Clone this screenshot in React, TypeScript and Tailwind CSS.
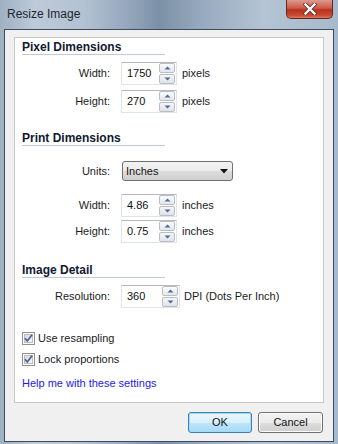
import React from 'react';

const font = "font-['Liberation_Sans',Arial,sans-serif]";

function Spinner() {
  return (
    <div className="flex flex-col gap-[1px] w-[16px] mr-[1px]">
      <div className="h-[10px] border border-[#b9bec6] rounded-[2px] bg-[linear-gradient(#fbfbfc,#e4e7ec)] flex items-center justify-center">
        <svg width="7" height="4" viewBox="0 0 7 4">
          <path d="M0.5 3.5 L3.5 0.5 L6.5 3.5 Z" fill="#4d6a94" />
        </svg>
      </div>
      <div className="h-[10px] border border-[#b9bec6] rounded-[2px] bg-[linear-gradient(#f5f6f8,#dfe3e9)] flex items-center justify-center">
        <svg width="7" height="4" viewBox="0 0 7 4">
          <path d="M0.5 0.5 L3.5 3.5 L6.5 0.5 Z" fill="#4d6a94" />
        </svg>
      </div>
    </div>
  );
}

function SpinField({ value, wide }: { value: string; wide?: boolean }) {
  return (
    <div
      className={
        (wide ? 'w-[59px] ' : 'w-[56px] ') +
        'h-full flex items-center bg-white border border-[#dfe3ea] border-t-[#b5b8bf]'
      }
    >
      <span className="flex-1 pl-[5px] text-[11px] text-[#111]">{value}</span>
      <Spinner />
    </div>
  );
}

function Heading({ text, mt }: { text: string; mt: string }) {
  return (
    <div className={mt + ' ml-[7px] w-[143px] h-[16px] border-b border-[#bccbda] flex items-end'}>
      <span className="block leading-[13px] text-[12px] font-bold text-[#101830]">{text}</span>
    </div>
  );
}

function FieldRow({
  label,
  value,
  unit,
  mt,
  wide,
}: {
  label: string;
  value: string;
  unit: string;
  mt: string;
  wide?: boolean;
}) {
  return (
    <div className={mt + ' h-[23px] flex items-center'}>
      <span className="w-[95px] text-right text-[11px] text-[#1b1b1b]">{label}</span>
      <div className="ml-[11px] h-full">
        <SpinField value={value} wide={wide} />
      </div>
      <span className={(wide ? 'ml-[4px]' : 'ml-[5px]') + ' text-[11px] text-[#1b1b1b]'}>{unit}</span>
    </div>
  );
}

function CheckBox({ label, mt }: { label: string; mt: string }) {
  return (
    <div className={mt + ' ml-[7px] h-[13px] flex items-center'}>
      <svg width="13" height="13" viewBox="0 0 13 13">
        <defs>
          <linearGradient id="cbg" x1="0" y1="0" x2="1" y2="1">
            <stop offset="0" stopColor="#d6d9de" />
            <stop offset="1" stopColor="#f7f8f9" />
          </linearGradient>
        </defs>
        <rect x="0.5" y="0.5" width="12" height="12" fill="#fdfdfd" stroke="#8e8f8f" />
        <rect x="2.5" y="2.5" width="8" height="8" fill="url(#cbg)" stroke="#b7bcc3" />
        <path d="M3 6.2 L5.3 9 L10 2.8" fill="none" stroke="#4a5f9a" strokeWidth="1.7" />
      </svg>
      <span className="ml-[3px] text-[11px] text-[#1b1b1b]">{label}</span>
    </div>
  );
}

export default function App() {
  return (
    <div
      className={
        font +
        ' w-[338px] h-[444px] overflow-hidden flex flex-col bg-[linear-gradient(90deg,#9fb0c3_0%,#bccad9_10%,#b3c2d2_25%,#8fa2b8_40%,#7c90a7_47%,#98aabe_60%,#b4c4d4_78%,#a7b9cc_100%)]'
      }
    >
      {/* Title bar */}
      <div className="h-[29px] flex items-start">
        <span className="pl-[7px] pt-[6px] text-[12px] leading-[16px] text-[#1e2530]">Resize Image</span>
        <div className="ml-auto mr-[5px] w-[47px] h-[19px] rounded-b-[5px] border border-t-0 border-[#5e2a24] bg-[linear-gradient(#dd9a8f_0%,#cc5a48_45%,#b8321f_55%,#c84a32_85%,#de7a5c_100%)] flex items-center justify-center">
          <svg width="14" height="12" viewBox="0 0 14 12">
            <path d="M2.5 1.5 L11.5 10.5 M11.5 1.5 L2.5 10.5" stroke="#6b2a22" strokeWidth="4" strokeLinecap="square" />
            <path d="M2.5 1.5 L11.5 10.5 M11.5 1.5 L2.5 10.5" stroke="#ffffff" strokeWidth="2.4" strokeLinecap="square" />
          </svg>
        </div>
      </div>

      {/* Client area */}
      <div className="mx-[4px] h-[413px] border border-[#3e4c5f] bg-[#f0f0f0] flex flex-col">
        <div className="mx-[9px] mt-[7px] h-[366px] border border-[#c9c9c9] bg-white flex flex-col">
          <Heading text="Pixel Dimensions" mt="mt-[1px]" />
          <FieldRow label="Width:" value="1750" unit="pixels" mt="mt-[7px]" />
          <FieldRow label="Height:" value="270" unit="pixels" mt="mt-[5px]" />

          <Heading text="Print Dimensions" mt="mt-[17px]" />
          <div className="mt-[15px] h-[20px] flex items-center">
            <span className="w-[95px] text-right text-[11px] text-[#1b1b1b]">Units:</span>
            <div className="ml-[12px] w-[111px] h-full rounded-[3px] border border-[#707070] bg-[linear-gradient(#f3f3f3_0%,#ebebeb_50%,#dddddd_51%,#cfcfcf_100%)] flex items-center pl-[3px] pr-[4px]">
              <span className="flex-1 text-[11px] text-[#111]">Inches</span>
              <svg width="8" height="5" viewBox="0 0 8 5">
                <path d="M0 0 L8 0 L4 4.5 Z" fill="#111" />
              </svg>
            </div>
          </div>
          <FieldRow label="Width:" value="4.86" unit="inches" mt="mt-[13px]" />
          <FieldRow label="Height:" value="0.75" unit="inches" mt="mt-[3px]" />

          <Heading text="Image Detail" mt="mt-[19px]" />
          <FieldRow label="Resolution:" value="360" unit="DPI (Dots Per Inch)" mt="mt-[7px]" wide />

          <CheckBox label="Use resampling" mt="mt-[24px]" />
          <CheckBox label="Lock proportions" mt="mt-[8px]" />

          <span className="mt-[11px] ml-[7px] leading-[13px] text-[11px] text-[#1a1aee]">
            Help me with these settings
          </span>
        </div>

        {/* Buttons */}
        <div className="mt-[9px] flex justify-end gap-[6px] pr-[10px]">
          <div className="w-[64px] h-[21px] rounded-[3px] border border-[#3c7fb1] bg-[linear-gradient(#eaf6fd_0%,#d9f0fc_50%,#bee6fd_51%,#a7d9f5_100%)] shadow-[inset_0_0_0_1px_#9edcf7] flex items-center justify-center text-[11px] text-[#111]">
            OK
          </div>
          <div className="w-[65px] h-[21px] rounded-[3px] border border-[#707070] bg-[linear-gradient(#f2f2f2_0%,#ebebeb_50%,#dddddd_51%,#cfcfcf_100%)] shadow-[inset_0_0_0_1px_#fcfcfc] flex items-center justify-center text-[11px] text-[#111]">
            Cancel
          </div>
        </div>
      </div>
    </div>
  );
}
